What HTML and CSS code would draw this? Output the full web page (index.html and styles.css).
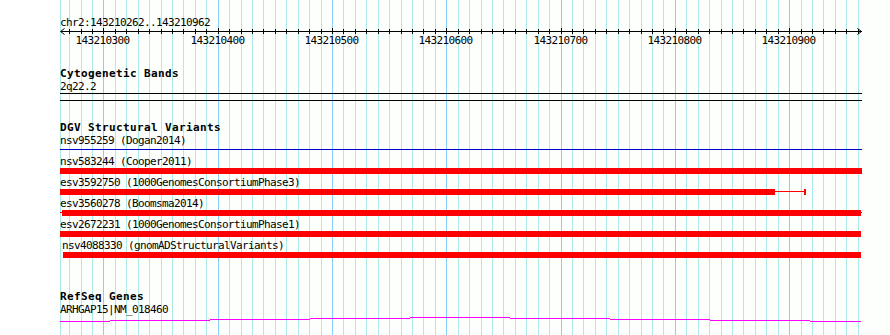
FILE: index.html
```html
<!DOCTYPE html>
<html lang="en">
<head>
  <meta charset="UTF-8" />
  <title>chr2:143210262..143210962</title>
  <link rel="stylesheet" href="styles.css">
</head>
<body>
  <div class="browser">
    <div class="gutter"></div>

    <div class="view">
      <svg class="grid" id="grid" width="830" height="335"></svg>

      <section class="ruler">
        <div class="locus">chr2:143210262..143210962</div>
        <svg class="scale" id="scale" width="830" height="20">
          <line class="axis" x1="0.5" y1="4.5" x2="801.5" y2="4.5" />
          <polyline class="arrow" points="4.5,1.5 0.5,4.5 4.5,7.5" />
          <polyline class="arrow" points="797.5,1.5 801.5,4.5 797.5,7.5" />
        </svg>
      </section>

      <section class="track">
        <h2 class="track-title">Cytogenetic Bands</h2>
        <div class="label">2q22.2</div>
        <div class="band"></div>
      </section>

      <section class="track dgv">
        <h2 class="track-title">DGV Structural Variants</h2>

        <div class="feature">
          <div class="label">nsv955259 (Dogan2014)</div>
          <div class="glyph"><div class="rule" style="width:802px"></div></div>
        </div>
        <div class="feature">
          <div class="label">nsv583244 (Cooper2011)</div>
          <div class="glyph"><div class="bar" style="width:802px"></div></div>
        </div>
        <div class="feature">
          <div class="label">esv3592750 (1000GenomesConsortiumPhase3)</div>
          <div class="glyph">
            <div class="bar" style="width:715px"></div>
            <div class="stem" style="width:29px"></div>
            <div class="cap"></div>
          </div>
        </div>
        <div class="feature">
          <div class="label">esv3560278 (Boomsma2014)</div>
          <div class="glyph">
            <div class="stem" style="width:2px"></div>
            <div class="bar" style="width:799px"></div>
            <div class="stem" style="width:1px"></div>
          </div>
        </div>
        <div class="feature">
          <div class="label">esv2672231 (1000GenomesConsortiumPhase1)</div>
          <div class="glyph"><div class="bar" style="width:801px"></div></div>
        </div>
        <div class="feature shifted">
          <div class="label">nsv4088330 (gnomADStructuralVariants)</div>
          <div class="glyph"><div class="bar" style="width:798px"></div></div>
        </div>
      </section>

      <section class="track refseq">
        <h2 class="track-title">RefSeq Genes</h2>
        <div class="label">ARHGAP15|NM_018460</div>
        <svg class="gene" width="802" height="8">
          <rect x="0" y="5" width="50" height="1" />
          <rect x="50" y="4" width="100" height="1" />
          <rect x="150" y="3" width="100" height="1" />
          <rect x="250" y="2" width="100" height="1" />
          <rect x="350" y="1" width="100" height="1" />
          <rect x="450" y="2" width="100" height="1" />
          <rect x="550" y="3" width="100" height="1" />
          <rect x="650" y="4" width="100" height="1" />
          <rect x="750" y="5" width="51" height="1" />
        </svg>
      </section>
    </div>
  </div>

  <script>
    const start = 143210262;
    const end = 143210962;
    const pxPerBp = 800 / 700;
    const ns = 'http://www.w3.org/2000/svg';
    const grid = document.getElementById('grid');
    const scale = document.getElementById('scale');

    function addLine(svg, x1, y1, x2, y2, cls) {
      const l = document.createElementNS(ns, 'line');
      l.setAttribute('x1', x1);
      l.setAttribute('y1', y1);
      l.setAttribute('x2', x2);
      l.setAttribute('y2', y2);
      l.setAttribute('class', cls);
      svg.appendChild(l);
    }

    // left edge of the view
    addLine(grid, 0.5, 0, 0.5, 335, 'minor');

    for (let bp = 143210270; bp <= end; bp += 10) {
      const x = Math.round((bp - start) * pxPerBp) + 0.5;
      const major = bp % 100 === 0;
      addLine(grid, x, 0, x, 335, major ? 'major' : 'minor');
      addLine(scale, x, major ? 1 : 2, x, 7, 'tick');

      if (major) {
        const t = document.createElementNS(ns, 'text');
        t.setAttribute('x', x - 1);
        t.setAttribute('y', 17);
        t.textContent = bp;
        scale.appendChild(t);
      }
    }
  </script>
</body>
</html>
```

FILE: styles.css
```css
body {
  margin: 0;
  background: #ffffff;
  color: #000000;
  font-family: 'DejaVu Sans Mono', 'Liberation Mono', monospace;
  font-size: 11px;
}

.browser {
  display: flex;
  height: 335px;
  overflow: hidden;
}

.gutter {
  flex: none;
  width: 60px;
}

.view {
  position: relative;
  flex: 1;
  background: #fcfffc;
}

/* grid sits behind every track */
.grid {
  position: absolute;
  top: 0;
  left: 0;
  shape-rendering: crispEdges;
}

.grid .minor {
  stroke: #aeeaea;
  stroke-width: 1;
}

.grid .major {
  stroke: #87cefa;
  stroke-width: 1;
}

section {
  position: relative;
}

.ruler {
  padding-top: 17px;
}

.locus,
.label {
  line-height: 12px;
  letter-spacing: -0.62px;
  white-space: nowrap;
}

.scale {
  display: block;
  margin-top: -2px;
  overflow: visible;
}

.scale .axis,
.scale .tick {
  stroke: #000000;
  stroke-width: 1;
  shape-rendering: crispEdges;
}

.scale .arrow {
  fill: none;
  stroke: #000000;
  stroke-width: 1;
}

.scale text {
  font-family: 'DejaVu Sans Mono', 'Liberation Mono', monospace;
  font-size: 11px;
  letter-spacing: -0.62px;
  text-anchor: middle;
  fill: #000000;
}

.track {
  margin-top: 21px;
}

.track-title {
  margin: 0 0 1px;
  font-size: 11px;
  font-weight: bold;
  line-height: 12px;
  letter-spacing: 0.38px;
  white-space: nowrap;
}

.band {
  width: 802px;
  height: 6px;
  border-top: 1px solid #000000;
  border-bottom: 1px solid #000000;
}

.glyph {
  display: flex;
  align-items: flex-start;
  height: 6px;
  margin-bottom: 3px;
}

.bar {
  flex: none;
  height: 6px;
  background: #ff0000;
}

.stem {
  flex: none;
  height: 1px;
  margin-top: 2px;
  background: #ff0000;
}

.cap {
  flex: none;
  width: 2px;
  height: 6px;
  background: #ff0000;
}

.rule {
  flex: none;
  height: 1px;
  margin-top: 2px;
  background: #0000cc;
}

.shifted .label {
  margin-left: 2px;
}

.shifted .glyph {
  margin-left: 3px;
}

.refseq {
  margin-top: 33px;
}

.gene {
  display: block;
  fill: #ff00ff;
  shape-rendering: crispEdges;
}
```
